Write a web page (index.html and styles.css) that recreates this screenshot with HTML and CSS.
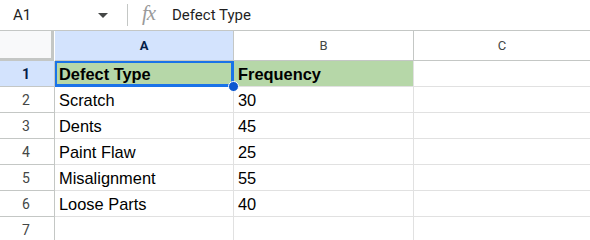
FILE: index.html
```html
<!DOCTYPE html>
<html>
<head>
<meta charset="utf-8">
<link rel="stylesheet" href="styles.css">
</head>
<body>
<div class="fbar">
  <div class="namebox"><span class="ref">A1</span><svg class="caret" width="10" height="5" viewBox="0 0 10 5"><path d="M0 0h10L5 5z" fill="#444746"/></svg></div>
  <div class="divider"></div>
  <div class="fx"><i>fx</i></div>
  <div class="ftext">Defect Type</div>
</div>
<div class="grid">
  <div class="corner"></div>
  <div class="ch sel">A</div>
  <div class="ch">B</div>
  <div class="ch last">C</div>

  <div class="rh sel">1</div>
  <div class="c g b active">Defect Type<span class="dot"></span></div>
  <div class="c g b">Frequency</div>
  <div class="c last"></div>

  <div class="rh">2</div><div class="c">Scratch</div><div class="c">30</div><div class="c last"></div>
  <div class="rh">3</div><div class="c">Dents</div><div class="c">45</div><div class="c last"></div>
  <div class="rh">4</div><div class="c">Paint Flaw</div><div class="c">25</div><div class="c last"></div>
  <div class="rh">5</div><div class="c">Misalignment</div><div class="c">55</div><div class="c last"></div>
  <div class="rh">6</div><div class="c">Loose Parts</div><div class="c">40</div><div class="c last"></div>
  <div class="rh">7</div><div class="c"></div><div class="c"></div><div class="c last"></div>
</div>
</body>
</html>
```
FILE: styles.css
```css
* { box-sizing: border-box; }
html, body { margin: 0; padding: 0; background: #fff; overflow: hidden; }
body { width: 590px; height: 240px; font-family: Roboto, "Liberation Sans", Arial, sans-serif; color: #1f1f1f; }

.fbar {
  height: 31px;
  display: flex;
  align-items: center;
  border-bottom: 1px solid #c4c7c5;
}
.namebox {
  width: 127px;
  display: flex;
  align-items: center;
  justify-content: space-between;
  padding: 0 19px 0 13px;
}
.ref { font-size: 15px; color: #1f1f1f; }
.caret { margin-top: 1px; }
.divider { width: 1px; height: 22px; background: #c4c7c5; }
.fx {
  width: 44px;
  padding-left: 14px;
  font-family: "Liberation Serif", serif;
  font-size: 21px;
  color: #9a9a9a;
  margin-top: -3px;
}
.fx i { letter-spacing: -1px; }
.ftext { font-size: 15px; color: #1f1f1f; }

.grid {
  display: grid;
  grid-template-columns: 55px 179px 180px 176px;
  grid-template-rows: 30px repeat(7, 26px);
}
.corner {
  background: #f8f9fa;
  border-right: 3px solid #c4c7c5;
  border-bottom: 3px solid #c4c7c5;
  margin-right: 1px;
}
.ch {
  display: flex; align-items: center; justify-content: center;
  font-family: Roboto, "Liberation Sans", sans-serif;
  font-size: 13px;
  color: #444746;
  border-right: 1px solid #c4c7c5;
  border-bottom: 1px solid #c4c7c5;
}
.ch.sel { background: #d3e3fd; font-weight: bold; color: #041e49; }
.ch.last { border-right: none; }
.rh {
  display: flex; align-items: center; justify-content: center;
  font-family: Roboto, "Liberation Sans", sans-serif;
  font-size: 14px;
  color: #444746;
  border-right: 1px solid #c4c7c5;
  border-bottom: 1px solid #c4c7c5;
  padding-right: 2px;
}
.rh.sel { background: #d3e3fd; color: #041e49; font-weight: bold; }
.c {
  position: relative;
  display: flex; align-items: center;
  padding: 1px 3px 0 4px;
  font-family: "Liberation Sans", Arial, sans-serif;
  font-size: 16.4px;
  color: #000;
  border-right: 1px solid #e1e1e1;
  border-bottom: 1px solid #e1e1e1;
  white-space: nowrap;
}
.c.last { border-right: none; }
.c.g { background: #b6d7a8; }
.c.b { font-weight: bold; }
.c.active { box-shadow: inset 0 0 0 2px #1a73e8; border-color: #1a73e8; }
.dot {
  position: absolute;
  right: -6px; bottom: -6px;
  width: 11px; height: 11px;
  border-radius: 50%;
  background: #0b57d0;
  border: 1px solid #fff;
  z-index: 2;
}
```
